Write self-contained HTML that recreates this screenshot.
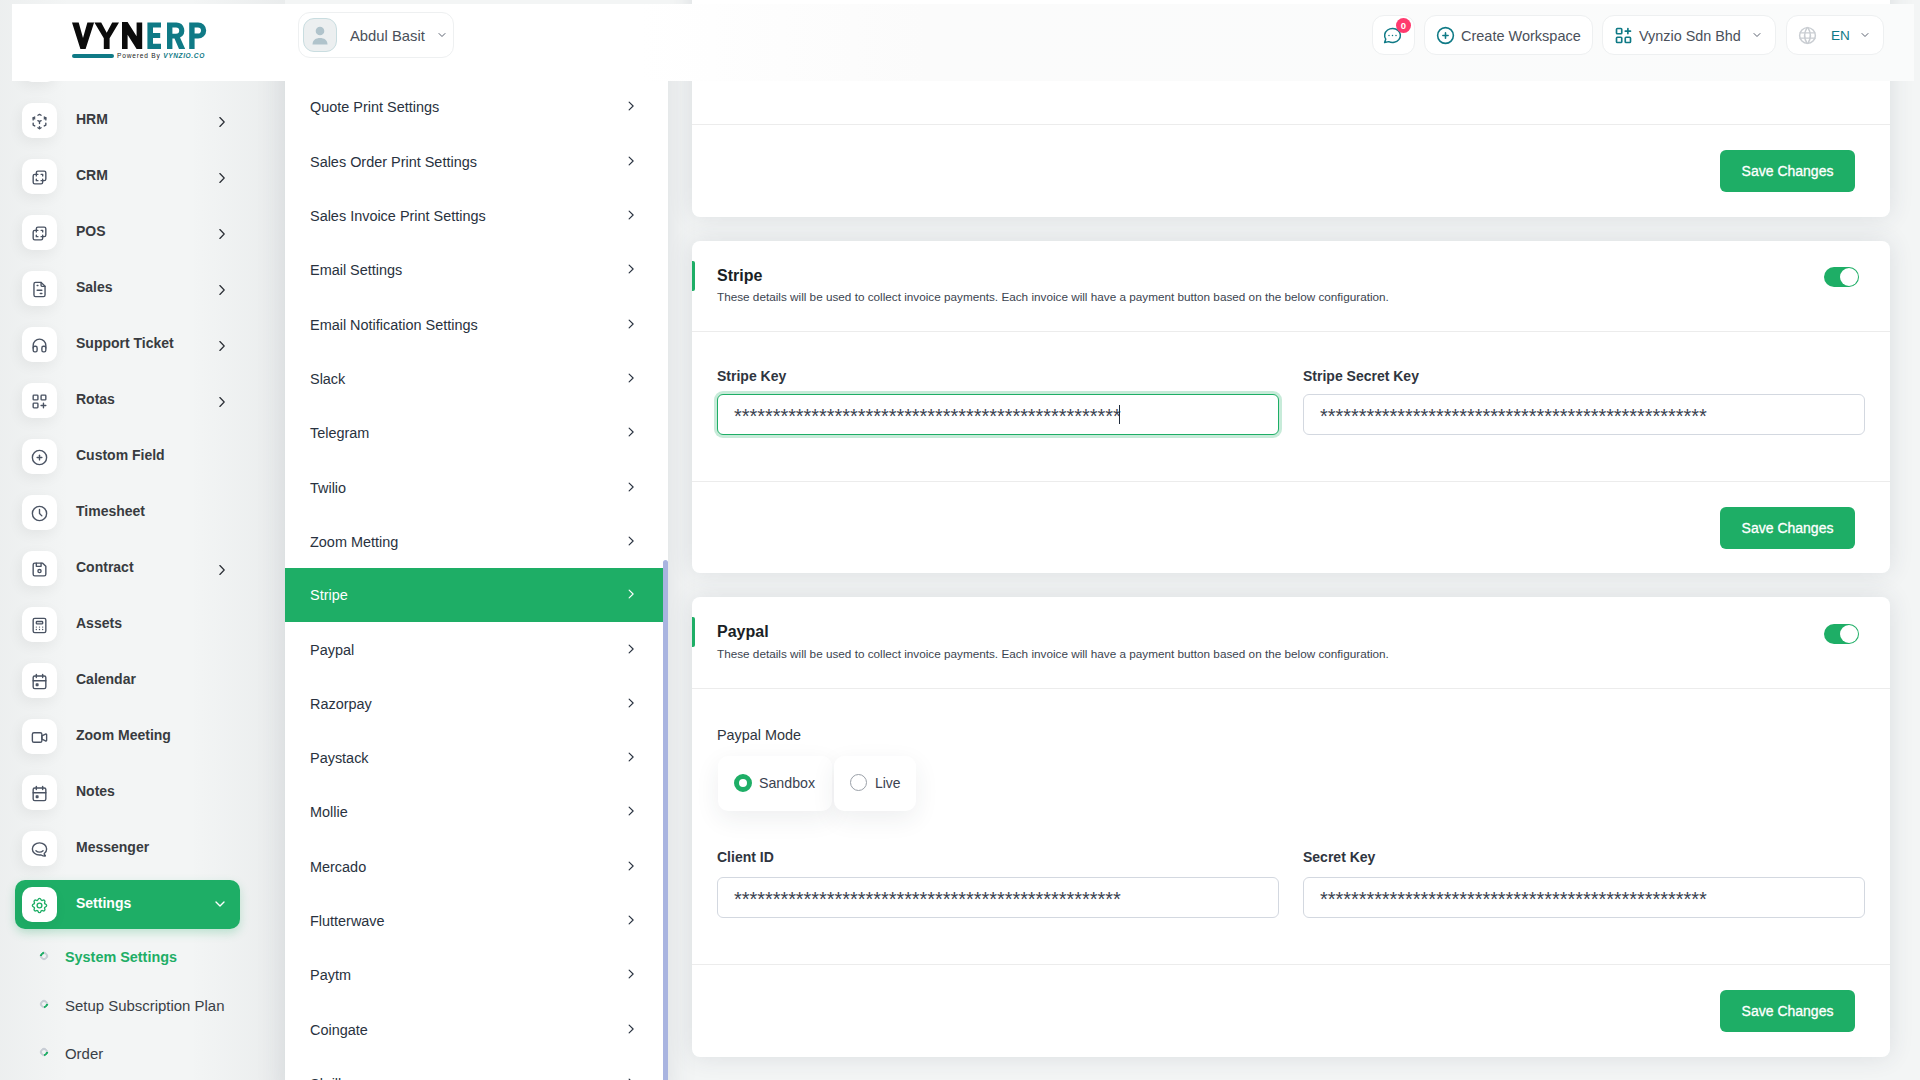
<!DOCTYPE html>
<html><head><meta charset="utf-8">
<style>
*{box-sizing:border-box;margin:0;padding:0}
html,body{width:1920px;height:1080px;overflow:hidden}
body{position:relative;background:#f3f5f5;font-family:"Liberation Sans",sans-serif;color:#293240}
.abs{position:absolute}
#panel{left:285px;top:40px;width:383px;height:1060px;background:#fff;box-shadow:0 0 28px rgba(50,60,80,.12)}
.card{position:absolute;left:692px;width:1198px;background:#fff;border-radius:8px;box-shadow:0 0 24px rgba(50,60,80,.12)}
.line{position:absolute;left:0;width:100%;height:1px;background:#ececec}
.btn{position:absolute;left:1028px;width:135px;height:42px;background:#1eae66;border-radius:6px;color:#fff;font-size:14px;text-align:center;line-height:42px;-webkit-text-stroke:0.3px #fff}
.accent{position:absolute;left:0;width:3px;height:30px;background:#1eae66;border-radius:0 2px 2px 0}
.ctitle{position:absolute;left:25px;margin-top:1.5px;font-size:16px;font-weight:700;color:#1a1f26}
.cdesc{position:absolute;left:25px;font-size:11.74px;color:#3b4450;white-space:nowrap}
.toggle{position:absolute;left:1132px;width:35px;height:20px;border-radius:10px;background:#1eae66}
.toggle::after{content:"";position:absolute;right:1px;top:1px;width:18px;height:18px;border-radius:50%;background:#fff}
.lbl{position:absolute;font-size:14px;font-weight:700;color:#2f3540;white-space:nowrap}
.inp{position:absolute;width:562px;height:41px;border:1px solid #d3d8e0;border-radius:6px;background:#fff;font-size:20px;padding-left:16px;padding-top:2px;line-height:39px;color:#3a4250;letter-spacing:-0.05px;white-space:nowrap;overflow:hidden}
.inp.focus{border:1px solid #1eae66;box-shadow:0 0 0 3px rgba(30,174,102,.25)}
/* sidebar */
.si{position:absolute;left:0;width:240px;height:50px}
.si .ib{position:absolute;left:22px;top:8px;width:35px;height:35px;background:#fff;border-radius:10px;box-shadow:-2px 4px 14px rgba(0,0,0,.06)}
.si .ib svg{position:absolute;left:8px;top:9px;width:19px;height:19px}
.si .t{position:absolute;left:76px;top:16px;font-size:14px;font-weight:700;color:#383b40;white-space:nowrap}
.si .ch{position:absolute;left:214px;top:18.5px;width:16px;height:16px}
.ml{position:absolute;left:310px;margin-top:2px;font-size:14.45px;color:#293240;white-space:nowrap}
.mc{position:absolute;left:623px;width:16px;height:16px}
svg{fill:none;stroke-linecap:round;stroke-linejoin:round}
#header{left:12px;top:4px;width:1902px;height:77px;background:linear-gradient(to right,#fff 0%,#fff 33%,#fbfbfb 48%,#fafbfb 100%)}
.hb{position:absolute;background:#fff;border:1px solid #eef0f1;border-radius:12px}
</style></head><body>
<div class="abs" style="left:0;top:0;width:285px;height:1080px;background:linear-gradient(to right,rgba(60,70,80,.035) 0px,rgba(60,70,80,0) 70px,rgba(60,70,80,0) 190px,rgba(60,70,80,.03) 250px,rgba(60,70,80,.05) 285px)"></div>
<div id="panel" class="abs"></div>

<!-- sidebar -->
<div class="si" style="top:39px"><div class="ib"></div></div>
<div class="si" style="top:95px"><div class="ib"><svg viewBox="0 0 24 24" stroke="#4a5363" stroke-width="1.75"><path d="M6 17.6l-2 -1.1v-2.5"/><path d="M4 10v-2.5l2 -1.1"/><path d="M10 4.1l2 -1.1l2 1.1"/><path d="M18 6.4l2 1.1v2.5"/><path d="M20 14v2.5l-2 1.12"/><path d="M14 19.9l-2 1.1l-2 -1.1"/><path d="M12 12l2 -1.1"/><path d="M18 8.6l2 -1.1"/><path d="M12 12l0 2.5"/><path d="M12 18.5l0 2.5"/><path d="M12 12l-2 -1.12"/><path d="M6 8.6l-2 -1.1"/></svg></div><div class="t">HRM</div><svg class="ch" viewBox="0 0 24 24" stroke="#2a2e35" stroke-width="1.8"><path d="M8.8 5.3l6.5 6.7l-6.5 6.7"/></svg></div>
<div class="si" style="top:151px"><div class="ib"><svg viewBox="0 0 24 24" stroke="#4a5363" stroke-width="1.75"><path d="M16 16v2a2 2 0 0 1 -2 2h-8a2 2 0 0 1 -2 -2v-8a2 2 0 0 1 2 -2h2v-2a2 2 0 0 1 2 -2h8a2 2 0 0 1 2 2v8a2 2 0 0 1 -2 2h-2"/><path d="M10 8l-2 0l0 2"/><path d="M8 14l0 2l2 0"/><path d="M14 8l2 0l0 2"/><path d="M16 14l0 2l-2 0"/></svg></div><div class="t">CRM</div><svg class="ch" viewBox="0 0 24 24" stroke="#2a2e35" stroke-width="1.8"><path d="M8.8 5.3l6.5 6.7l-6.5 6.7"/></svg></div>
<div class="si" style="top:207px"><div class="ib"><svg viewBox="0 0 24 24" stroke="#4a5363" stroke-width="1.75"><path d="M16 16v2a2 2 0 0 1 -2 2h-8a2 2 0 0 1 -2 -2v-8a2 2 0 0 1 2 -2h2v-2a2 2 0 0 1 2 -2h8a2 2 0 0 1 2 2v8a2 2 0 0 1 -2 2h-2"/><path d="M10 8l-2 0l0 2"/><path d="M8 14l0 2l2 0"/><path d="M14 8l2 0l0 2"/><path d="M16 14l0 2l-2 0"/></svg></div><div class="t">POS</div><svg class="ch" viewBox="0 0 24 24" stroke="#2a2e35" stroke-width="1.8"><path d="M8.8 5.3l6.5 6.7l-6.5 6.7"/></svg></div>
<div class="si" style="top:263px"><div class="ib"><svg viewBox="0 0 24 24" stroke="#4a5363" stroke-width="1.75"><path d="M14 3v4a1 1 0 0 0 1 1h4"/><path d="M17 21h-10a2 2 0 0 1 -2 -2v-14a2 2 0 0 1 2 -2h7l5 5v11a2 2 0 0 1 -2 2z"/><path d="M9 7l1 0"/><path d="M9 13l6 0"/><path d="M13 17l2 0"/></svg></div><div class="t">Sales</div><svg class="ch" viewBox="0 0 24 24" stroke="#2a2e35" stroke-width="1.8"><path d="M8.8 5.3l6.5 6.7l-6.5 6.7"/></svg></div>
<div class="si" style="top:319px"><div class="ib"><svg viewBox="0 0 24 24" stroke="#4a5363" stroke-width="1.75"><path d="M4 15a2 2 0 0 1 2 -2h1a2 2 0 0 1 2 2v3a2 2 0 0 1 -2 2h-1a2 2 0 0 1 -2 -2z"/><path d="M15 15a2 2 0 0 1 2 -2h1a2 2 0 0 1 2 2v3a2 2 0 0 1 -2 2h-1a2 2 0 0 1 -2 -2z"/><path d="M4 15v-3a8 8 0 0 1 16 0v3"/></svg></div><div class="t">Support Ticket</div><svg class="ch" viewBox="0 0 24 24" stroke="#2a2e35" stroke-width="1.8"><path d="M8.8 5.3l6.5 6.7l-6.5 6.7"/></svg></div>
<div class="si" style="top:375px"><div class="ib"><svg viewBox="0 0 24 24" stroke="#4a5363" stroke-width="1.75"><path d="M4 5a1 1 0 0 1 1 -1h4a1 1 0 0 1 1 1v4a1 1 0 0 1 -1 1h-4a1 1 0 0 1 -1 -1z"/><path d="M14 5a1 1 0 0 1 1 -1h4a1 1 0 0 1 1 1v4a1 1 0 0 1 -1 1h-4a1 1 0 0 1 -1 -1z"/><path d="M4 15a1 1 0 0 1 1 -1h4a1 1 0 0 1 1 1v4a1 1 0 0 1 -1 1h-4a1 1 0 0 1 -1 -1z"/><path d="M14 17h6m-3 -3v6"/></svg></div><div class="t">Rotas</div><svg class="ch" viewBox="0 0 24 24" stroke="#2a2e35" stroke-width="1.8"><path d="M8.8 5.3l6.5 6.7l-6.5 6.7"/></svg></div>
<div class="si" style="top:431px"><div class="ib"><svg viewBox="0 0 24 24" stroke="#4a5363" stroke-width="1.75"><path d="M3 12a9 9 0 1 0 18 0a9 9 0 1 0 -18 0"/><path d="M9 12l6 0"/><path d="M12 9l0 6"/></svg></div><div class="t">Custom Field</div></div>
<div class="si" style="top:487px"><div class="ib"><svg viewBox="0 0 24 24" stroke="#4a5363" stroke-width="1.75"><path d="M3 12a9 9 0 1 0 18 0a9 9 0 0 0 -18 0"/><path d="M12 7v5l3 3"/></svg></div><div class="t">Timesheet</div></div>
<div class="si" style="top:543px"><div class="ib"><svg viewBox="0 0 24 24" stroke="#4a5363" stroke-width="1.75"><path d="M6 4h10l4 4v10a2 2 0 0 1 -2 2h-12a2 2 0 0 1 -2 -2v-12a2 2 0 0 1 2 -2"/><path d="M10 14a2 2 0 1 0 4 0a2 2 0 1 0 -4 0"/><path d="M14 4l0 4l-6 0l0 -4"/></svg></div><div class="t">Contract</div><svg class="ch" viewBox="0 0 24 24" stroke="#2a2e35" stroke-width="1.8"><path d="M8.8 5.3l6.5 6.7l-6.5 6.7"/></svg></div>
<div class="si" style="top:599px"><div class="ib"><svg viewBox="0 0 24 24" stroke="#4a5363" stroke-width="1.75"><path d="M4 5a2 2 0 0 1 2 -2h12a2 2 0 0 1 2 2v14a2 2 0 0 1 -2 2h-12a2 2 0 0 1 -2 -2z"/><path d="M8 8a1 1 0 0 1 1 -1h6a1 1 0 0 1 1 1v1a1 1 0 0 1 -1 1h-6a1 1 0 0 1 -1 -1z"/><path d="M8 14l0 .01"/><path d="M12 14l0 .01"/><path d="M16 14l0 .01"/><path d="M8 17l0 .01"/><path d="M12 17l0 .01"/><path d="M16 17l0 .01"/></svg></div><div class="t">Assets</div></div>
<div class="si" style="top:655px"><div class="ib"><svg viewBox="0 0 24 24" stroke="#4a5363" stroke-width="1.75"><path d="M4 7a2 2 0 0 1 2 -2h12a2 2 0 0 1 2 2v12a2 2 0 0 1 -2 2h-12a2 2 0 0 1 -2 -2z"/><path d="M16 3l0 4"/><path d="M8 3l0 4"/><path d="M4 11l16 0"/><path d="M8 15h2v2h-2z"/></svg></div><div class="t">Calendar</div></div>
<div class="si" style="top:711px"><div class="ib"><svg viewBox="0 0 24 24" stroke="#4a5363" stroke-width="1.75"><path d="M15 10l4.553 -2.276a1 1 0 0 1 1.447 .894v6.764a1 1 0 0 1 -1.447 .894l-4.553 -2.276v-4z"/><path d="M3 8a2 2 0 0 1 2 -2h8a2 2 0 0 1 2 2v8a2 2 0 0 1 -2 2h-8a2 2 0 0 1 -2 -2z"/></svg></div><div class="t">Zoom Meeting</div></div>
<div class="si" style="top:767px"><div class="ib"><svg viewBox="0 0 24 24" stroke="#4a5363" stroke-width="1.75"><path d="M4 7a2 2 0 0 1 2 -2h12a2 2 0 0 1 2 2v12a2 2 0 0 1 -2 2h-12a2 2 0 0 1 -2 -2z"/><path d="M16 3l0 4"/><path d="M8 3l0 4"/><path d="M4 11l16 0"/><path d="M8 15h2v2h-2z"/></svg></div><div class="t">Notes</div></div>
<div class="si" style="top:823px"><div class="ib"><svg viewBox="0 0 24 24" stroke="#4a5363" stroke-width="1.75"><path d="M17.802 17.292s.077 -.055 .2 -.149c1.843 -1.425 3 -3.49 3 -5.789c0 -4.286 -4.03 -7.764 -9 -7.764c-4.97 0 -9 3.478 -9 7.764c0 4.288 4.03 7.646 9 7.646c.424 0 1.12 -.028 2.088 -.084c1.262 .82 3.104 1.493 4.716 1.493c.499 0 .734 -.41 .414 -.828c-.486 -.596 -1.156 -1.551 -1.416 -2.29z"/><path d="M7.5 13.5c2.5 2.5 6.5 2.5 9 0"/></svg></div><div class="t">Messenger</div></div>
<div class="abs" style="left:15px;top:880px;width:225px;height:49px;background:#1eae66;border-radius:10px;box-shadow:0 4px 10px rgba(30,174,102,.25)"></div>
<div class="si" style="top:879px"><div class="ib"><svg viewBox="0 0 24 24" stroke="#1eae66" stroke-width="1.75"><path d="M10.325 4.317c.426 -1.756 2.924 -1.756 3.35 0a1.724 1.724 0 0 0 2.573 1.066c1.543 -.94 3.31 .826 2.37 2.37a1.724 1.724 0 0 0 1.065 2.572c1.756 .426 1.756 2.924 0 3.35a1.724 1.724 0 0 0 -1.066 2.573c.94 1.543 -.826 3.31 -2.37 2.37a1.724 1.724 0 0 0 -2.572 1.065c-.426 1.756 -2.924 1.756 -3.35 0a1.724 1.724 0 0 0 -2.573 -1.066c-1.543 .94 -3.31 -.826 -2.37 -2.37a1.724 1.724 0 0 0 -1.065 -2.572c-1.756 -.426 -1.756 -2.924 0 -3.35a1.724 1.724 0 0 0 1.066 -2.573c-.94 -1.543 .826 -3.31 2.37 -2.37c1 .608 2.296 .07 2.572 -1.065z"/><path d="M9 12a3 3 0 1 0 6 0a3 3 0 0 0 -6 0"/></svg></div><div class="t" style="color:#fff">Settings</div><svg class="ch" viewBox="0 0 24 24" stroke="#fff" stroke-width="2" style="left:212px;top:16.5px"><path d="M6 9l6 6l6 -6"/></svg></div>
<div class="abs" style="left:40px;top:952px;width:8px;height:8px;border-radius:50%;border:2.2px solid #c8cdd5;border-top-color:#1eae66;transform:rotate(-45deg)"></div>
<div class="abs" style="left:65px;top:948.5px;font-size:14.4px;font-weight:700;color:#1eae66;white-space:nowrap">System Settings</div>
<div class="abs" style="left:40px;top:1000px;width:8px;height:8px;border-radius:50%;border:2.2px solid #c8cdd5;border-bottom-color:#1eae66;transform:rotate(-45deg)"></div>
<div class="abs" style="left:65px;top:997px;font-size:14.95px;font-weight:400;color:#3a3f47;white-space:nowrap">Setup Subscription Plan</div>
<div class="abs" style="left:40px;top:1048px;width:8px;height:8px;border-radius:50%;border:2.2px solid #c8cdd5;border-bottom-color:#1eae66;transform:rotate(-45deg)"></div>
<div class="abs" style="left:65px;top:1045px;font-size:14.95px;font-weight:400;color:#3a3f47;white-space:nowrap">Order</div>
<!-- menu -->
<div class="abs" style="left:285px;top:568px;width:378px;height:54px;background:#1eae66"></div>
<div class="ml" style="top:97px;color:#293240">Quote Print Settings</div>
<svg class="mc" style="top:98px" viewBox="0 0 24 24" stroke="#293240" stroke-width="1.7"><path d="M9.2 6.3l6 5.7l-6 5.7"/></svg>
<div class="ml" style="top:152px;color:#293240">Sales Order Print Settings</div>
<svg class="mc" style="top:153px" viewBox="0 0 24 24" stroke="#293240" stroke-width="1.7"><path d="M9.2 6.3l6 5.7l-6 5.7"/></svg>
<div class="ml" style="top:206px;color:#293240">Sales Invoice Print Settings</div>
<svg class="mc" style="top:207px" viewBox="0 0 24 24" stroke="#293240" stroke-width="1.7"><path d="M9.2 6.3l6 5.7l-6 5.7"/></svg>
<div class="ml" style="top:260px;color:#293240">Email Settings</div>
<svg class="mc" style="top:261px" viewBox="0 0 24 24" stroke="#293240" stroke-width="1.7"><path d="M9.2 6.3l6 5.7l-6 5.7"/></svg>
<div class="ml" style="top:315px;color:#293240">Email Notification Settings</div>
<svg class="mc" style="top:316px" viewBox="0 0 24 24" stroke="#293240" stroke-width="1.7"><path d="M9.2 6.3l6 5.7l-6 5.7"/></svg>
<div class="ml" style="top:369px;color:#293240">Slack</div>
<svg class="mc" style="top:370px" viewBox="0 0 24 24" stroke="#293240" stroke-width="1.7"><path d="M9.2 6.3l6 5.7l-6 5.7"/></svg>
<div class="ml" style="top:423px;color:#293240">Telegram</div>
<svg class="mc" style="top:424px" viewBox="0 0 24 24" stroke="#293240" stroke-width="1.7"><path d="M9.2 6.3l6 5.7l-6 5.7"/></svg>
<div class="ml" style="top:478px;color:#293240">Twilio</div>
<svg class="mc" style="top:479px" viewBox="0 0 24 24" stroke="#293240" stroke-width="1.7"><path d="M9.2 6.3l6 5.7l-6 5.7"/></svg>
<div class="ml" style="top:532px;color:#293240">Zoom Metting</div>
<svg class="mc" style="top:533px" viewBox="0 0 24 24" stroke="#293240" stroke-width="1.7"><path d="M9.2 6.3l6 5.7l-6 5.7"/></svg>
<div class="ml" style="top:585px;color:#fff">Stripe</div>
<svg class="mc" style="top:586px" viewBox="0 0 24 24" stroke="#fff" stroke-width="1.7"><path d="M9.2 6.3l6 5.7l-6 5.7"/></svg>
<div class="ml" style="top:640px;color:#293240">Paypal</div>
<svg class="mc" style="top:641px" viewBox="0 0 24 24" stroke="#293240" stroke-width="1.7"><path d="M9.2 6.3l6 5.7l-6 5.7"/></svg>
<div class="ml" style="top:694px;color:#293240">Razorpay</div>
<svg class="mc" style="top:695px" viewBox="0 0 24 24" stroke="#293240" stroke-width="1.7"><path d="M9.2 6.3l6 5.7l-6 5.7"/></svg>
<div class="ml" style="top:748px;color:#293240">Paystack</div>
<svg class="mc" style="top:749px" viewBox="0 0 24 24" stroke="#293240" stroke-width="1.7"><path d="M9.2 6.3l6 5.7l-6 5.7"/></svg>
<div class="ml" style="top:802px;color:#293240">Mollie</div>
<svg class="mc" style="top:803px" viewBox="0 0 24 24" stroke="#293240" stroke-width="1.7"><path d="M9.2 6.3l6 5.7l-6 5.7"/></svg>
<div class="ml" style="top:857px;color:#293240">Mercado</div>
<svg class="mc" style="top:858px" viewBox="0 0 24 24" stroke="#293240" stroke-width="1.7"><path d="M9.2 6.3l6 5.7l-6 5.7"/></svg>
<div class="ml" style="top:911px;color:#293240">Flutterwave</div>
<svg class="mc" style="top:912px" viewBox="0 0 24 24" stroke="#293240" stroke-width="1.7"><path d="M9.2 6.3l6 5.7l-6 5.7"/></svg>
<div class="ml" style="top:965px;color:#293240">Paytm</div>
<svg class="mc" style="top:966px" viewBox="0 0 24 24" stroke="#293240" stroke-width="1.7"><path d="M9.2 6.3l6 5.7l-6 5.7"/></svg>
<div class="ml" style="top:1020px;color:#293240">Coingate</div>
<svg class="mc" style="top:1021px" viewBox="0 0 24 24" stroke="#293240" stroke-width="1.7"><path d="M9.2 6.3l6 5.7l-6 5.7"/></svg>
<div class="ml" style="top:1074px;color:#293240">Skrill</div>
<svg class="mc" style="top:1075px" viewBox="0 0 24 24" stroke="#293240" stroke-width="1.7"><path d="M9.2 6.3l6 5.7l-6 5.7"/></svg>
<div class="abs" style="left:663px;top:560px;width:5px;height:520px;background:#a9b4e0;border-radius:3px 3px 0 0"></div>
<!-- cards -->
<div class="card" style="top:-200px;height:417px">
  <div class="line" style="top:324px"></div>
  <div class="btn" style="top:350px">Save Changes</div>
</div>
<div class="card" style="top:241px;height:332px">
  <div class="accent" style="top:20px"></div>
  <div class="ctitle" style="top:24px">Stripe</div>
  <div class="cdesc" style="top:49px">These details will be used to collect invoice payments. Each invoice will have a payment button based on the below configuration.</div>
  <div class="toggle" style="top:26px"></div>
  <div class="line" style="top:90px"></div>
  <div class="lbl" style="left:25px;top:127px">Stripe Key</div>
  <div class="lbl" style="left:611px;top:127px">Stripe Secret Key</div>
  <div class="abs" style="left:427px;top:164px;width:1px;height:19px;background:#1e2a3a;z-index:2"></div>
  <div class="inp focus" style="left:25px;top:153px">**************************************************</div>
  <div class="inp" style="left:611px;top:153px">**************************************************</div>
  <div class="line" style="top:240px"></div>
  <div class="btn" style="top:266px">Save Changes</div>
</div>
<div class="card" style="top:597px;height:460px">
  <div class="accent" style="top:20px"></div>
  <div class="ctitle" style="top:24px">Paypal</div>
  <div class="cdesc" style="top:50px">These details will be used to collect invoice payments. Each invoice will have a payment button based on the below configuration.</div>
  <div class="toggle" style="top:27px"></div>
  <div class="line" style="top:91px"></div>
  <div class="lbl" style="left:25px;top:130px;font-weight:400;font-size:14.4px">Paypal Mode</div>
    <div class="abs" style="left:26px;top:159px;width:114px;height:55px;background:#fff;border-radius:10px;box-shadow:0 8px 24px rgba(40,50,70,.08)"></div>
  <div class="abs" style="left:142px;top:159px;width:82px;height:55px;background:#fff;border-radius:10px;box-shadow:0 8px 24px rgba(40,50,70,.08)"></div>
  <div class="abs" style="left:42px;top:177px;width:18px;height:18px;border-radius:50%;border:5px solid #1eae66;background:#fff"></div>
  <div class="abs" style="left:67px;top:178px;font-size:14.2px;color:#3a4250">Sandbox</div>
  <div class="abs" style="left:158px;top:177px;width:17px;height:17px;border-radius:50%;border:1px solid #9aa0a8;background:#fff"></div>
  <div class="abs" style="left:183px;top:178px;font-size:13.9px;color:#3a4250">Live</div>
  <div class="lbl" style="left:25px;top:252px">Client ID</div>
  <div class="lbl" style="left:611px;top:252px">Secret Key</div>
  <div class="inp" style="left:25px;top:280px">**************************************************</div>
  <div class="inp" style="left:611px;top:280px">**************************************************</div>
  <div class="line" style="top:367px"></div>
  <div class="btn" style="top:393px">Save Changes</div>
</div>

<div id="header" class="abs"></div>
<!-- logo -->
<svg class="abs" style="left:72px;top:22px" width="140" height="40" viewBox="0 0 140 40">
<g fill="#0b0b0b">
<path d="M0 0.4h6.7l4.3 15.6l4.4 -15.6h6.7l-8.5 26.6h-5.2z"/>
<path d="M22.4 0.4h6.8l5.5 10.3l5.5 -10.3h6.8l-9.4 15.8v10.8h-5.8v-10.8z"/>
<path d="M50 0h5.6l9 14.2v-13.8h5.6v26.6h-5.6l-9 -14.2v14.2h-5.6z"/>
</g>
<g fill="#0f7a86" fill-rule="evenodd">
<path d="M75.4 0.4h13.6v5.2h-8v5.3h7.2v5h-7.2v5.9h8v5.2h-13.6z"/>
<path d="M95 0.4h9.2a8 8 0 0 1 3.8 15.1l5.2 11.5h-6.2l-4.5 -10.4h-2.1v10.4h-5.4z M100.4 5.4v6.4h3.6a3.2 3.2 0 0 0 0 -6.4z"/>
<path d="M117.2 0.4h8.9a8.1 8.1 0 0 1 0 16.2h-3.5v10.4h-5.4z M122.6 5.4v6.2h3.3a3.1 3.1 0 0 0 0 -6.2z"/>
</g>
<rect x="0" y="32" width="42" height="4" rx="2" fill="#0f7a86"/>
</svg>
<div class="abs" style="left:117px;top:51.5px;font-size:6.6px;letter-spacing:0.8px;white-space:nowrap;line-height:8px"><span style="color:#222">Powered By </span><span style="color:#0f7a86;font-style:italic;font-weight:700;letter-spacing:0.6px">VYNZIO.CO</span></div>
<!-- user -->
<div class="hb" style="left:298px;top:12px;width:156px;height:46px"></div>
<div class="abs" style="left:303px;top:18px;width:34px;height:34px;border-radius:11px;background:#eceff0;border:1px solid #c9dde0;overflow:hidden">
<svg width="34" height="34" viewBox="0 0 34 34" style="position:absolute;left:-1px;top:-1px"><circle cx="17" cy="13" r="4.3" fill="#b0c3cb"/><path d="M9.5 26.5c0-4.5 3.5-6.5 7.5-6.5s7.5 2 7.5 6.5z" fill="#b0c3cb"/></svg></div>
<div class="abs" style="left:350px;top:28px;font-size:14.8px;color:#4a505a;white-space:nowrap">Abdul Basit</div>
<svg class="abs" style="left:436px;top:29px" width="12" height="12" viewBox="0 0 24 24" stroke="#5b6270" stroke-width="2"><path d="M6 9l6 6l6 -6"/></svg>
<!-- chat -->
<div class="hb" style="left:1372px;top:15px;width:43px;height:40px"></div>
<svg class="abs" style="left:1382px;top:25px" width="21" height="21" viewBox="0 0 24 24" stroke="#0f7a86" stroke-width="1.7"><path d="M3 20l1.3 -3.9c-2.324 -3.437 -1.426 -7.872 2.1 -10.374c3.526 -2.501 8.59 -2.296 11.845 .48c3.255 2.777 3.695 7.266 1.029 10.501c-2.666 3.235 -7.615 4.215 -11.574 2.293l-4.7 1"/><path d="M12 12l0 .01"/><path d="M8 12l0 .01"/><path d="M16 12l0 .01"/></svg>
<div class="abs" style="left:1396px;top:18px;width:15px;height:15px;border-radius:50%;background:#ff3a6e;color:#fff;font-size:9.5px;font-weight:700;text-align:center;line-height:15px">0</div>
<!-- create workspace -->
<div class="hb" style="left:1424px;top:15px;width:169px;height:40px"></div>
<svg class="abs" style="left:1435px;top:25px" width="21" height="21" viewBox="0 0 24 24" stroke="#0f7a86" stroke-width="1.8"><path d="M3 12a9 9 0 1 0 18 0a9 9 0 1 0 -18 0"/><path d="M9 12l6 0"/><path d="M12 9l0 6"/></svg>
<div class="abs" style="left:1461px;top:28px;font-size:14.5px;color:#4a505a;white-space:nowrap">Create Workspace</div>
<!-- company -->
<div class="hb" style="left:1602px;top:15px;width:174px;height:40px"></div>
<svg class="abs" style="left:1613px;top:25px" width="21" height="21" viewBox="0 0 24 24" stroke="#0f7a86" stroke-width="1.9"><path d="M4 5a1 1 0 0 1 1 -1h4a1 1 0 0 1 1 1v4a1 1 0 0 1 -1 1h-4a1 1 0 0 1 -1 -1z"/><path d="M4 15a1 1 0 0 1 1 -1h4a1 1 0 0 1 1 1v4a1 1 0 0 1 -1 1h-4a1 1 0 0 1 -1 -1z"/><path d="M14 15a1 1 0 0 1 1 -1h4a1 1 0 0 1 1 1v4a1 1 0 0 1 -1 1h-4a1 1 0 0 1 -1 -1z"/><path d="M14 7l6 0"/><path d="M17 4l0 6"/></svg>
<div class="abs" style="left:1639px;top:28px;font-size:14.4px;color:#4a505a;white-space:nowrap">Vynzio Sdn Bhd</div>
<svg class="abs" style="left:1751px;top:29px" width="12" height="12" viewBox="0 0 24 24" stroke="#5b6270" stroke-width="2"><path d="M6 9l6 6l6 -6"/></svg>
<!-- lang -->
<div class="hb" style="left:1786px;top:15px;width:98px;height:40px"></div>
<svg class="abs" style="left:1797px;top:25px" width="21" height="21" viewBox="0 0 24 24" stroke="#c9cdd2" stroke-width="1.7"><path d="M3 12a9 9 0 1 0 18 0a9 9 0 0 0 -18 0"/><path d="M3.6 9h16.8"/><path d="M3.6 15h16.8"/><path d="M11.5 3a17 17 0 0 0 0 18"/><path d="M12.5 3a17 17 0 0 1 0 18"/></svg>
<div class="abs" style="left:1831px;top:28px;font-size:13.6px;color:#0f7a86;white-space:nowrap">EN</div>
<svg class="abs" style="left:1859px;top:29px" width="12" height="12" viewBox="0 0 24 24" stroke="#5b6270" stroke-width="2"><path d="M6 9l6 6l6 -6"/></svg>

</body></html>
